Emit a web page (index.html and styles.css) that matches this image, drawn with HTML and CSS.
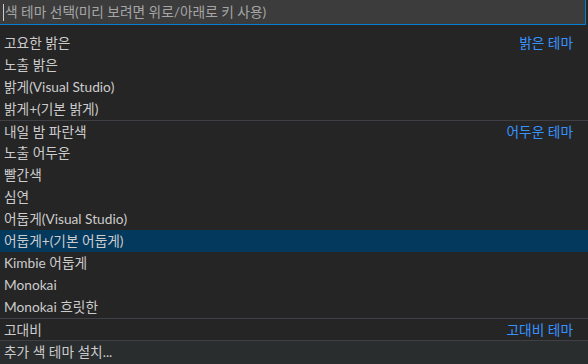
FILE: index.html
```html
<!DOCTYPE html>
<html lang="ko">
<head>
    <meta charset="UTF-8">
    <title>색 테마</title>
    <link rel="stylesheet" href="styles.css">
</head>
<body>
    <div class="picker">
        <div class="input">
            <span class="caret"></span>
            <span class="placeholder">색 테마 선택(미리 보려면 위로/아래로 키 사용)</span>
        </div>
        <ul class="list">
            <li class="item"><span>고요한 밝은</span><span class="group">밝은 테마</span></li>
            <li class="item"><span>노출 밝은</span></li>
            <li class="item"><span>밝게(Visual Studio)</span></li>
            <li class="item"><span>밝게+(기본 밝게)</span></li>
            <li class="item sep"><span>내일 밤 파란색</span><span class="group">어두운 테마</span></li>
            <li class="item"><span>노출 어두운</span></li>
            <li class="item"><span>빨간색</span></li>
            <li class="item"><span>심연</span></li>
            <li class="item"><span>어둡게(Visual Studio)</span></li>
            <li class="item active"><span>어둡게+(기본 어둡게)</span></li>
            <li class="item"><span>Kimbie 어둡게</span></li>
            <li class="item"><span>Monokai</span></li>
            <li class="item"><span>Monokai 흐릿한</span></li>
            <li class="item sep"><span>고대비</span><span class="group">고대비 테마</span></li>
            <li class="item sep more"><span>추가 색 테마 설치...</span></li>
        </ul>
    </div>
</body>
</html>
```

FILE: styles.css
```css
* {
    margin: 0;
    padding: 0;
    box-sizing: border-box;
}

html, body {
    height: 100%;
    overflow: hidden;
}

body {
    background: #252526;
    color: #cccccc;
    font-family: "Lato", "Noto Sans CJK KR", sans-serif;
    font-size: 13.7px;
}

.picker {
    width: 588px;
}

.input {
    display: flex;
    align-items: center;
    width: 586px;
    height: 25px;
    background: #3c3c3c;
    border-right: 1px solid #007fd4;
    border-bottom: 1px solid #007fd4;
    padding-left: 3px;
}

.caret {
    width: 1px;
    height: 17px;
    background: #cccccc;
    margin-right: 1px;
}

.placeholder {
    color: #a6a6a6;
    line-height: 24px;
}

.list {
    list-style: none;
    margin-top: 7px;
}

.item {
    display: flex;
    justify-content: space-between;
    height: 22px;
    line-height: 22px;
    padding: 0 15px 0 4px;
    white-space: nowrap;
}

.item.sep {
    border-top: 1px solid #3f3f46;
}

.item.active {
    background: #04395e;
}

.item.more {
    background: #2a2d2e;
    height: 26px;
}

.group {
    color: #3794ff;
}
```
